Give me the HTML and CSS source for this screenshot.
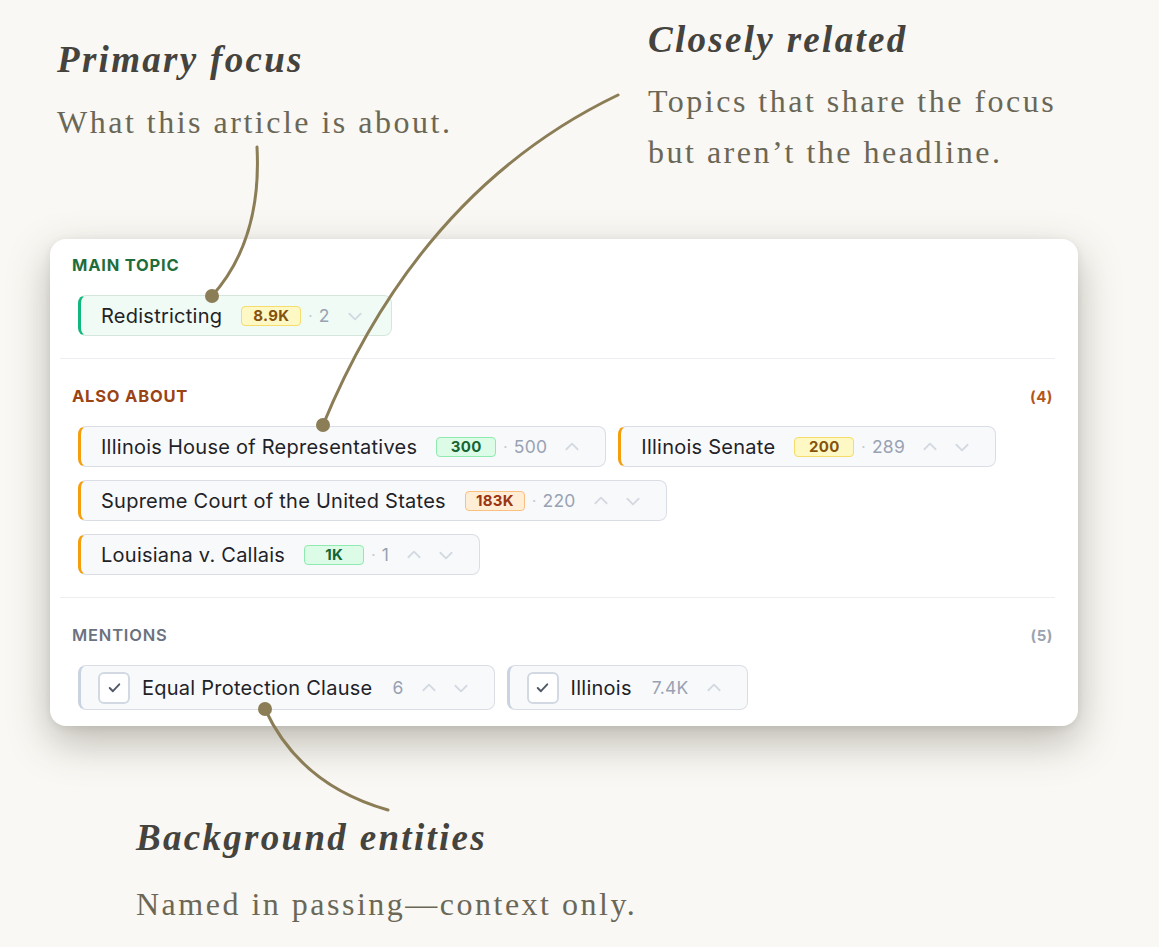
FILE: index.html
```html
<!DOCTYPE html>
<html lang="en">
<head>
    <meta charset="UTF-8">
    <meta name="viewport" content="width=device-width, initial-scale=1.0">
    <title>Topic Roles</title>
    <link rel="stylesheet" href="styles.css">
</head>
<body>
    <div class="page">
        <div class="notes-top">
            <div class="note note-primary">
                <h2>Primary focus</h2>
                <p>What this article is about.</p>
            </div>
            <div class="note note-related">
                <h2>Closely related</h2>
                <p>Topics that share the focus<br>but aren’t the headline.</p>
            </div>
        </div>

        <div class="card">
            <section class="group group-main">
                <div class="group-head">
                    <span class="group-label">Main topic</span>
                </div>
                <div class="chips">
                    <div class="chip chip-main">
                        <span class="chip-name">Redistricting</span>
                        <span class="badge badge-yellow">8.9K</span>
                        <span class="sep">·</span>
                        <span class="count">2</span>
                        <span class="arrows">
                            <svg class="arrow" viewBox="0 0 16 16"><path d="M3 6l5 5 5-5"/></svg>
                        </span>
                    </div>
                </div>
            </section>

            <section class="group group-also">
                <div class="group-head">
                    <span class="group-label">Also about</span>
                    <span class="group-count">(4)</span>
                </div>
                <div class="chips">
                    <div class="chip chip-also">
                        <span class="chip-name">Illinois House of Representatives</span>
                        <span class="badge badge-green">300</span>
                        <span class="sep">·</span>
                        <span class="count">500</span>
                        <span class="arrows">
                            <svg class="arrow" viewBox="0 0 16 16"><path d="M3 10l5-5 5 5"/></svg>
                        </span>
                    </div>
                    <div class="chip chip-also">
                        <span class="chip-name">Illinois Senate</span>
                        <span class="badge badge-yellow">200</span>
                        <span class="sep">·</span>
                        <span class="count">289</span>
                        <span class="arrows">
                            <svg class="arrow" viewBox="0 0 16 16"><path d="M3 10l5-5 5 5"/></svg>
                            <svg class="arrow" viewBox="0 0 16 16"><path d="M3 6l5 5 5-5"/></svg>
                        </span>
                    </div>
                    <div class="chip chip-also">
                        <span class="chip-name">Supreme Court of the United States</span>
                        <span class="badge badge-orange">183K</span>
                        <span class="sep">·</span>
                        <span class="count">220</span>
                        <span class="arrows">
                            <svg class="arrow" viewBox="0 0 16 16"><path d="M3 10l5-5 5 5"/></svg>
                            <svg class="arrow" viewBox="0 0 16 16"><path d="M3 6l5 5 5-5"/></svg>
                        </span>
                    </div>
                    <div class="chip chip-also">
                        <span class="chip-name">Louisiana v. Callais</span>
                        <span class="badge badge-green">1K</span>
                        <span class="sep">·</span>
                        <span class="count">1</span>
                        <span class="arrows">
                            <svg class="arrow" viewBox="0 0 16 16"><path d="M3 10l5-5 5 5"/></svg>
                            <svg class="arrow" viewBox="0 0 16 16"><path d="M3 6l5 5 5-5"/></svg>
                        </span>
                    </div>
                </div>
            </section>

            <section class="group group-mentions">
                <div class="group-head">
                    <span class="group-label">Mentions</span>
                    <span class="group-count">(5)</span>
                </div>
                <div class="chips">
                    <div class="chip chip-mention">
                        <span class="check">
                            <svg viewBox="0 0 16 16"><path d="M3.5 8.5l3 3 6-6.5"/></svg>
                        </span>
                        <span class="chip-name">Equal Protection Clause</span>
                        <span class="count">6</span>
                        <span class="arrows">
                            <svg class="arrow" viewBox="0 0 16 16"><path d="M3 10l5-5 5 5"/></svg>
                            <svg class="arrow" viewBox="0 0 16 16"><path d="M3 6l5 5 5-5"/></svg>
                        </span>
                    </div>
                    <div class="chip chip-mention">
                        <span class="check">
                            <svg viewBox="0 0 16 16"><path d="M3.5 8.5l3 3 6-6.5"/></svg>
                        </span>
                        <span class="chip-name">Illinois</span>
                        <span class="count">7.4K</span>
                        <span class="arrows">
                            <svg class="arrow" viewBox="0 0 16 16"><path d="M3 10l5-5 5 5"/></svg>
                        </span>
                    </div>
                </div>
            </section>
        </div>

        <div class="note note-background">
            <h2>Background entities</h2>
            <p>Named in passing—context only.</p>
        </div>

        <!-- leader lines from each note to the chip it describes -->
        <svg class="leaders" viewBox="0 0 1159 947">
            <path d="M257 147 Q262 240 212 296"/>
            <circle cx="212" cy="296" r="7"/>
            <path d="M618 95 Q420 190 323 425"/>
            <circle cx="323" cy="425" r="7"/>
            <path d="M265 709 Q300 785 388 810"/>
            <circle cx="265" cy="709" r="7"/>
        </svg>
    </div>
</body>
</html>
```

FILE: styles.css
```css
/* Page and annotation notes */
body {
    margin: 0;
    background-color: #f9f8f4;
    font-family: Inter, "Noto Sans", sans-serif;
}

.page {
    position: relative;
    width: 1159px;
    height: 947px;
    overflow: hidden;
}

.notes-top {
    display: flex;
    align-items: flex-start;
    padding-left: 57px;
    height: 239px;
}

.note h2 {
    margin: 0;
    font-family: "Liberation Serif", serif;
    font-style: italic;
    font-weight: bold;
    font-size: 37px;
    line-height: 42px;
    letter-spacing: 2.3px;
    color: #45433d;
}

.note p {
    margin: 0;
    font-family: "Liberation Serif", serif;
    font-size: 32px;
    line-height: 51px;
    letter-spacing: 2.5px;
    color: #6b6757;
}

.note-primary {
    margin-top: 39px;
    width: 591px;
}

.note-primary p {
    margin-top: 16px;
}

.note-related {
    margin-top: 19px;
}

.note-related p {
    margin-top: 15px;
}

.note-background {
    padding-left: 136px;
    margin-top: 91px;
}

.note-background p {
    margin-top: 20px;
}

/* Topic card */
.card {
    margin-left: 50px;
    width: 1028px;
    box-sizing: border-box;
    padding: 17px 23px 16px 10px;
    background: #fff;
    border-radius: 16px;
    box-shadow: 0 16px 40px rgba(70, 64, 48, 0.34), 0 2px 8px rgba(0, 0, 0, 0.08);
}

.group {
    padding: 0 2px 22px 12px;
    border-bottom: 1px solid #eceef1;
}

.group + .group {
    padding-top: 28px;
}

.group-mentions {
    border-bottom: none;
    padding-bottom: 0;
}

.group-head {
    display: flex;
    justify-content: space-between;
    align-items: center;
    height: 18px;
    margin-bottom: 21px;
}

.group-label {
    font-size: 16.5px;
    font-weight: 700;
    letter-spacing: 0.8px;
    text-transform: uppercase;
}

.group-count {
    font-size: 15px;
    font-weight: 700;
    letter-spacing: 0.5px;
}

.group-main .group-label { color: #1f6d3a; }
.group-also .group-label { color: #9a4315; }
.group-also .group-count { color: #b4561b; }
.group-mentions .group-label { color: #6b7280; font-weight: 600; }
.group-mentions .group-count { color: #9ca3af; }

.chips {
    display: flex;
    flex-wrap: wrap;
    gap: 13px 12px;
    padding-left: 6px;
}

/* Chips */
.chip {
    display: flex;
    align-items: center;
    height: 41px;
    box-sizing: border-box;
    padding: 0 24px 0 20px;
    border: 1px solid #dadee4;
    border-left: 3px solid #f59e0b;
    border-radius: 8px;
    background: #f8f9fb;
    font-size: 20px;
    letter-spacing: 0.25px;
    color: #1f2328;
}

.chip-main {
    background: #effbf4;
    border-color: #d5e7dc;
    border-left-color: #10b77f;
    padding-right: 27px;
}

.chip-mention {
    height: 45px;
    padding-left: 17px;
    border-left-color: #c9d3e1;
}

.chip-name {
    white-space: nowrap;
}

.badge {
    display: inline-flex;
    justify-content: center;
    align-items: center;
    min-width: 60px;
    height: 20px;
    box-sizing: border-box;
    margin-left: 19px;
    border: 1px solid;
    border-radius: 4px;
    font-size: 15px;
    font-weight: 700;
    letter-spacing: 0.3px;
}

.badge-yellow { background: #fef8c4; border-color: #f6dc6a; color: #85520e; }
.badge-green  { background: #dcfce7; border-color: #8eeab0; color: #166534; }
.badge-orange { background: #ffedd5; border-color: #fbbf80; color: #9a3412; }

.sep {
    margin: 0 6px 0 7px;
    font-size: 15px;
    color: #c4cad3;
}

.count {
    font-size: 17.5px;
    color: #98a2b3;
}

.chip-mention .count {
    margin-left: 20px;
}

.arrows {
    display: flex;
    gap: 14px;
    margin-left: 16px;
}

.arrow {
    width: 18px;
    height: 18px;
    fill: none;
    stroke: #d3d9e1;
    stroke-width: 1.6;
    stroke-linecap: round;
    stroke-linejoin: round;
}

.check {
    display: flex;
    justify-content: center;
    align-items: center;
    width: 32px;
    height: 32px;
    box-sizing: border-box;
    margin-right: 12px;
    border: 2px solid #d3d9e2;
    border-radius: 6px;
    background: #fff;
}

.check svg {
    width: 17px;
    height: 17px;
    fill: none;
    stroke: #505866;
    stroke-width: 1.8;
    stroke-linecap: round;
    stroke-linejoin: round;
}

/* Leader lines sit over the card */
.leaders {
    position: absolute;
    top: 0;
    left: 0;
    width: 1159px;
    height: 947px;
    pointer-events: none;
}

.leaders path {
    fill: none;
    stroke: #8b7d56;
    stroke-width: 3;
    stroke-linecap: round;
}

.leaders circle {
    fill: #8b7d56;
}
```
